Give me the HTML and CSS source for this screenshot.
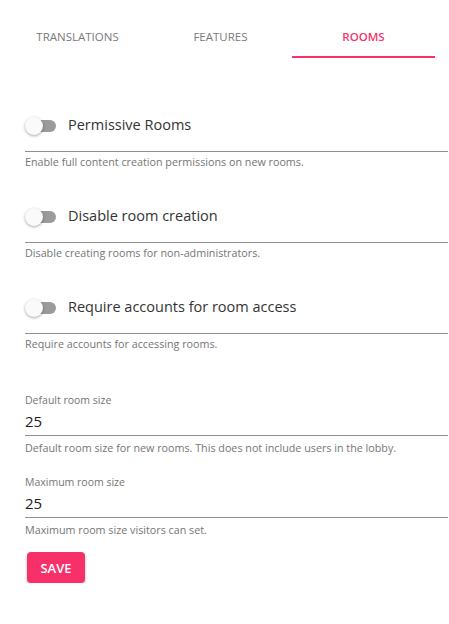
FILE: index.html
```html
<!DOCTYPE html>
<html>
<head>
<meta charset="utf-8">
<link rel="stylesheet" href="styles.css">
</head>
<body>
<div class="tabs">
  <div class="tab">Translations</div>
  <div class="tab">Features</div>
  <div class="tab active">Rooms</div>
</div>
<div class="content">
  <div class="switch-field">
    <div class="switch-row">
      <span class="toggle"><span class="track"></span><span class="thumb"></span></span>
      <span class="switch-label">Permissive Rooms</span>
    </div>
    <div class="helper">Enable full content creation permissions on new rooms.</div>
  </div>
  <div class="switch-field">
    <div class="switch-row">
      <span class="toggle"><span class="track"></span><span class="thumb"></span></span>
      <span class="switch-label">Disable room creation</span>
    </div>
    <div class="helper">Disable creating rooms for non-administrators.</div>
  </div>
  <div class="switch-field">
    <div class="switch-row">
      <span class="toggle"><span class="track"></span><span class="thumb"></span></span>
      <span class="switch-label">Require accounts for room access</span>
    </div>
    <div class="helper">Require accounts for accessing rooms.</div>
  </div>
  <div class="text-field first">
    <div class="field-label">Default room size</div>
    <div class="field-input">25</div>
    <div class="helper">Default room size for new rooms. This does not include users in the lobby.</div>
  </div>
  <div class="text-field">
    <div class="field-label">Maximum room size</div>
    <div class="field-input">25</div>
    <div class="helper">Maximum room size visitors can set.</div>
  </div>
  <button class="save">Save</button>
</div>
</body>
</html>
```
FILE: styles.css
```css
* { box-sizing: border-box; }
body {
  margin: 0;
  background: #fff;
  font-family: "Open Sans", "Noto Sans", sans-serif;
  color: #333;
}
.tabs {
  display: flex;
  margin: 14px 0 0 6px;
  width: 429px;
}
.tab {
  flex: 1;
  text-align: center;
  font-size: 11.5px;
  line-height: 17px;
  text-transform: uppercase;
  color: #7a7a7a;
  padding: 14px 0 11px;
  border-bottom: 2px solid transparent;
}
.tab.active {
  color: #f5336a;
  font-weight: 600;
  border-bottom-color: #f5336a;
}
.content {
  padding: 48px 1px 0 25px;
}
.switch-field + .switch-field { margin-top: 27px; }
.switch-row {
  display: flex;
  align-items: center;
  height: 46px;
  padding-bottom: 8px;
  border-bottom: 1px solid #8f8f8f;
}
.toggle {
  position: relative;
  width: 31px;
  height: 20px;
  margin-right: 12px;
  top: 1px;
}
.track {
  position: absolute;
  left: 3px;
  top: 4px;
  width: 28px;
  height: 12px;
  border-radius: 6px;
  background: #9b9b9b;
}
.thumb {
  position: absolute;
  left: 0;
  top: 1px;
  width: 18px;
  height: 18px;
  border-radius: 50%;
  background: #fafafa;
  box-shadow: 0 1px 3px rgba(0,0,0,0.35);
}
.switch-label {
  font-size: 14.5px;
  color: #333;
}
.helper {
  margin-top: 2px;
  font-size: 10.75px;
  line-height: 16px;
  color: #757575;
}
.text-field.first { margin-top: 40px; }
.text-field + .text-field { margin-top: 18px; }
.field-label {
  font-size: 10.5px;
  line-height: 16px;
  color: #757575;
}
.field-input {
  margin-top: 3px;
  font-size: 15px;
  line-height: 20px;
  padding-bottom: 4px;
  border-bottom: 1px solid #8f8f8f;
  color: #222;
}
.text-field .helper { margin-top: 4px; }
.save {
  display: block;
  margin: 14px 0 0 2px;
  width: 58px;
  height: 31px;
  border: none;
  border-radius: 4px;
  background: #f7306a;
  color: #fff;
  font-family: "Open Sans", "Noto Sans", sans-serif;
  font-size: 13px;
  font-weight: 600;
  text-transform: uppercase;
  box-shadow: 0 2px 3px rgba(0,0,0,0.25);
  padding: 0;
}
```
